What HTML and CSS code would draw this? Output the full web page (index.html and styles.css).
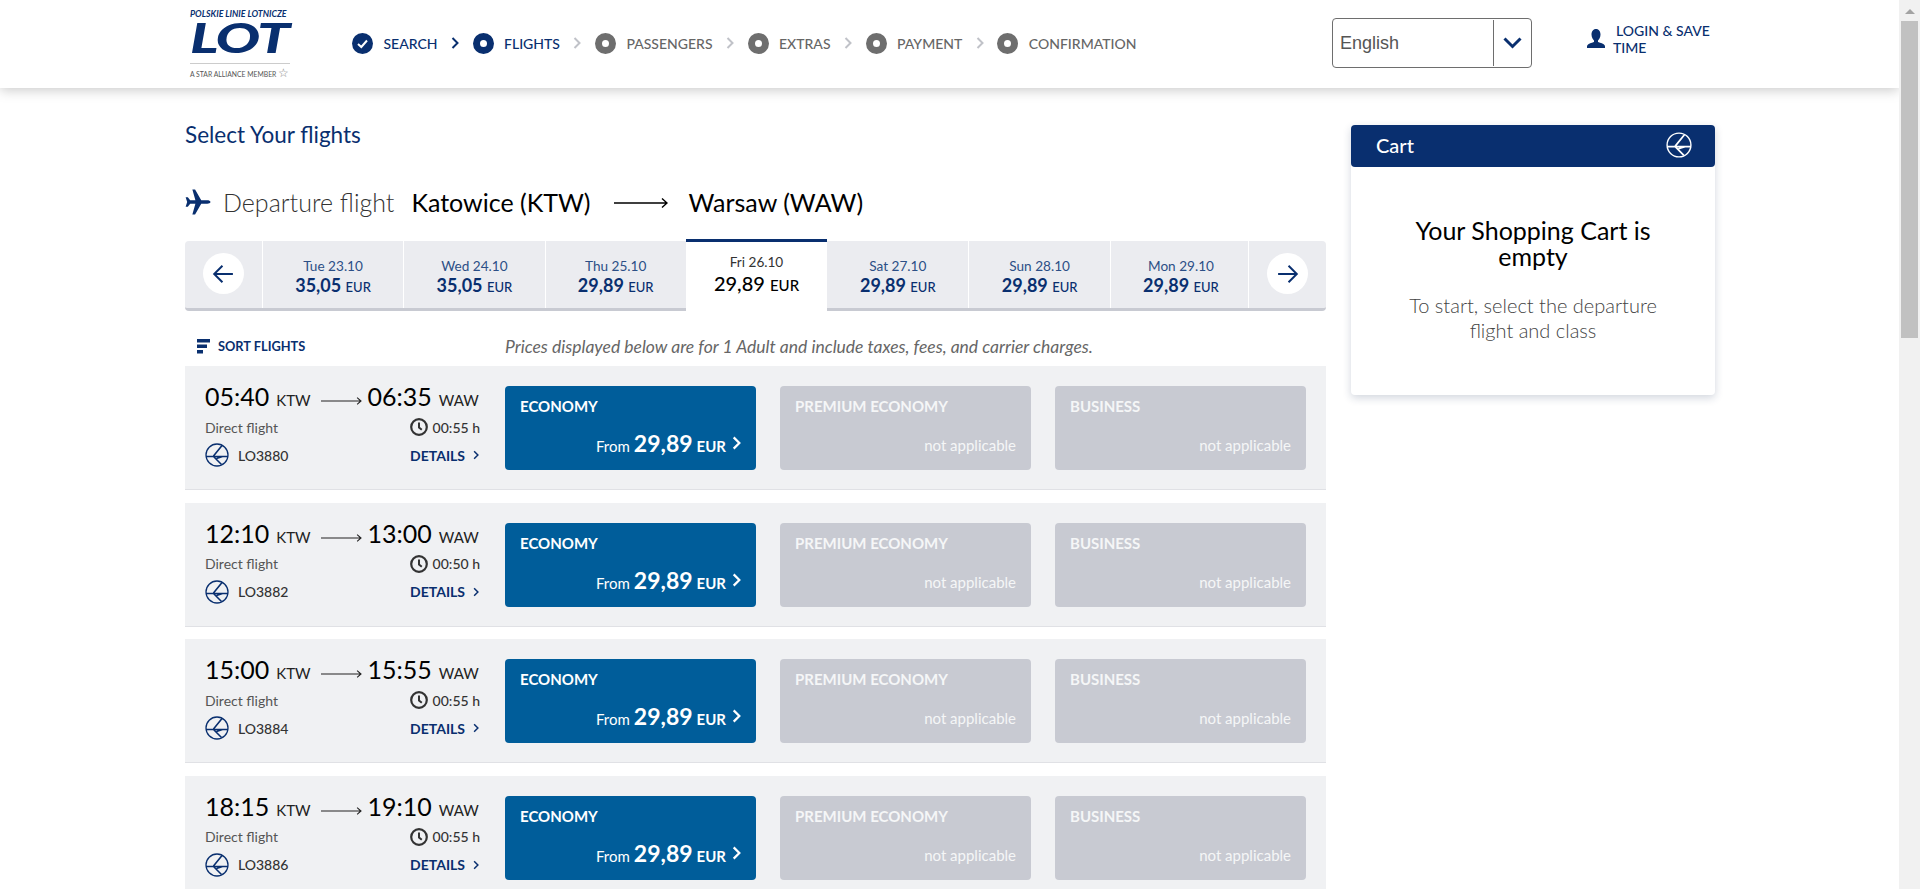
FILE: index.html
```html
<!DOCTYPE html>
<html>
<head>
    <title>LOT - Select Your flights</title>
    <link rel="stylesheet" href="styles.css">
</head>
<body>
<svg class="sprites" width="0" height="0">
    <symbol id="crane" viewBox="0 0 24 24">
        <circle cx="12" cy="12" r="11" fill="none" stroke="currentColor" stroke-width="1.3"/>
        <path d="M17 2.5 L8.5 13 M1 13.5 H23 M8.5 13.5 L16.5 21.5 M11.5 15.5 L17.5 13.5" fill="none" stroke="currentColor" stroke-width="1.6"/>
    </symbol>
    <symbol id="chev" viewBox="0 0 8 12">
        <path d="M1.5 1 L6.5 6 L1.5 11" fill="none" stroke="currentColor" stroke-width="2"/>
    </symbol>
    <symbol id="clock" viewBox="0 0 18 18">
        <circle cx="9" cy="9" r="7.8" fill="none" stroke="currentColor" stroke-width="2.2"/>
        <path d="M9 4.5 V9.5 L11.8 11.8" fill="none" stroke="currentColor" stroke-width="2"/>
    </symbol>
    <symbol id="long-arrow" viewBox="0 0 42 10">
        <path d="M0 5 H41 M37 1.5 L41 5 L37 8.5" fill="none" stroke="currentColor" stroke-width="1.1"/>
    </symbol>
</svg>
<div class="window">
    <div class="page">
        <header class="topbar">
            <div class="logo">
                <div class="logo-top">POLSKIE LINIE LOTNICZE</div>
                <div class="logo-word">LOT</div>
                <div class="logo-star">A STAR ALLIANCE MEMBER <span class="star">☆</span></div>
            </div>
            <nav class="steps">
                <span class="step done">
                    <svg class="dot" viewBox="0 0 21 21"><circle cx="10.5" cy="10.5" r="10.5" fill="#092f6f"/><path d="M6 11 L9.3 14 L15 7.5" fill="none" stroke="#fff" stroke-width="2"/></svg>
                    SEARCH
                </span>
                <svg class="step-chev on"><use href="#chev"/></svg>
                <span class="step done"><i class="ring navy"></i>FLIGHTS</span>
                <svg class="step-chev"><use href="#chev"/></svg>
                <span class="step"><i class="ring"></i>PASSENGERS</span>
                <svg class="step-chev"><use href="#chev"/></svg>
                <span class="step"><i class="ring"></i>EXTRAS</span>
                <svg class="step-chev"><use href="#chev"/></svg>
                <span class="step"><i class="ring"></i>PAYMENT</span>
                <svg class="step-chev"><use href="#chev"/></svg>
                <span class="step"><i class="ring"></i>CONFIRMATION</span>
            </nav>
            <div class="lang">
                <span class="lang-value">English</span>
                <span class="lang-btn">
                    <svg width="19" height="12" viewBox="0 0 19 12"><path d="M1.5 1.5 L9.5 9.5 L17.5 1.5" fill="none" stroke="#092f6f" stroke-width="3"/></svg>
                </span>
            </div>
            <a class="login">
                <svg width="18" height="20" viewBox="0 0 18 20"><path d="M9 0 C12 0 13.5 2.5 13.5 5.5 C13.5 8.5 12 10.5 11 11.5 V13 C13 14 18 14.5 18 17.5 V19 H0 V17.5 C0 14.5 5 14 7 13 V11.5 C6 10.5 4.5 8.5 4.5 5.5 C4.5 2.5 6 0 9 0 Z" fill="#092f6f"/></svg>
                <span class="login-text"><span class="login-first">LOGIN &amp; SAVE</span><br>TIME</span>
            </a>
        </header>

        <div class="content">
            <main class="flights">
                <h1 class="page-title">Select Your flights</h1>
                <div class="route">
                    <svg class="plane" width="26" height="26" viewBox="0 0 24 24"><path d="M23.5 12 C23.5 13 22 13.6 20.5 13.6 H15 L9.3 23.5 H6.8 L9.6 13.6 H4.8 L2.6 16.4 H0.6 L2 12 L0.6 7.6 H2.6 L4.8 10.4 H9.6 L6.8 0.5 H9.3 L15 10.4 H20.5 C22 10.4 23.5 11 23.5 12 Z" fill="#092f6f"/></svg>
                    <span class="route-label">Departure flight</span>
                    <span class="route-city">Katowice (KTW)</span>
                    <svg class="route-arrow" width="54" height="12" viewBox="0 0 54 12"><path d="M0 6 H53 M48 1.5 L53 6 L48 10.5" fill="none" stroke="#000" stroke-width="1.4"/></svg>
                    <span class="route-city">Warsaw (WAW)</span>
                </div>

                <div class="dates">
                    <div class="date-nav first">
                        <span class="round">
                            <svg width="22" height="22" viewBox="0 0 20 20"><path d="M19 10 H2 M9.5 2.5 L2 10 L9.5 17.5" fill="none" stroke="#092f6f" stroke-width="1.8"/></svg>
                        </span>
                    </div>
                    <div class="date"><span class="date-day">Tue 23.10</span><span class="date-price">35,05 <small>EUR</small></span></div>
                    <div class="date"><span class="date-day">Wed 24.10</span><span class="date-price">35,05 <small>EUR</small></span></div>
                    <div class="date"><span class="date-day">Thu 25.10</span><span class="date-price">29,89 <small>EUR</small></span></div>
                    <div class="date active"><span class="date-day">Fri 26.10</span><span class="date-price">29,89 <small>EUR</small></span></div>
                    <div class="date"><span class="date-day">Sat 27.10</span><span class="date-price">29,89 <small>EUR</small></span></div>
                    <div class="date"><span class="date-day">Sun 28.10</span><span class="date-price">29,89 <small>EUR</small></span></div>
                    <div class="date"><span class="date-day">Mon 29.10</span><span class="date-price">29,89 <small>EUR</small></span></div>
                    <div class="date-nav last">
                        <span class="round">
                            <svg width="22" height="22" viewBox="0 0 20 20"><path d="M1 10 H18 M10.5 2.5 L18 10 L10.5 17.5" fill="none" stroke="#092f6f" stroke-width="1.8"/></svg>
                        </span>
                    </div>
                </div>

                <div class="list-head">
                    <span class="sort">
                        <svg width="13" height="15" viewBox="0 0 13 15"><path d="M0 0 H13 V3.5 H0 Z M0 5.5 H10 V9 H0 Z M0 11 H6 V14.5 H0 Z" fill="#092f6f"/></svg>
                        SORT FLIGHTS
                    </span>
                    <span class="note">Prices displayed below are for 1 Adult and include taxes, fees, and carrier charges.</span>
                </div>

                <div class="flight">
                    <div class="flight-info">
                        <div class="times"><span class="time">05:40</span><span class="code">KTW</span><svg class="times-arrow"><use href="#long-arrow"/></svg><span class="time">06:35</span><span class="code">WAW</span></div>
                        <div class="info-line"><span class="direct">Direct flight</span><span class="dur"><svg class="clock"><use href="#clock"/></svg>00:55 h</span></div>
                        <div class="info-line"><span class="no"><svg class="crane"><use href="#crane"/></svg>LO3880</span><a class="details">DETAILS<svg class="det-chev"><use href="#chev"/></svg></a></div>
                    </div>
                    <div class="fare eco"><span class="fare-name">ECONOMY</span><span class="fare-price">From <b>29,89</b> <em>EUR</em><svg class="fare-chev"><use href="#chev"/></svg></span></div>
                    <div class="fare off"><span class="fare-name">PREMIUM ECONOMY</span><span class="fare-na">not applicable</span></div>
                    <div class="fare off"><span class="fare-name">BUSINESS</span><span class="fare-na">not applicable</span></div>
                </div>

                <div class="flight">
                    <div class="flight-info">
                        <div class="times"><span class="time">12:10</span><span class="code">KTW</span><svg class="times-arrow"><use href="#long-arrow"/></svg><span class="time">13:00</span><span class="code">WAW</span></div>
                        <div class="info-line"><span class="direct">Direct flight</span><span class="dur"><svg class="clock"><use href="#clock"/></svg>00:50 h</span></div>
                        <div class="info-line"><span class="no"><svg class="crane"><use href="#crane"/></svg>LO3882</span><a class="details">DETAILS<svg class="det-chev"><use href="#chev"/></svg></a></div>
                    </div>
                    <div class="fare eco"><span class="fare-name">ECONOMY</span><span class="fare-price">From <b>29,89</b> <em>EUR</em><svg class="fare-chev"><use href="#chev"/></svg></span></div>
                    <div class="fare off"><span class="fare-name">PREMIUM ECONOMY</span><span class="fare-na">not applicable</span></div>
                    <div class="fare off"><span class="fare-name">BUSINESS</span><span class="fare-na">not applicable</span></div>
                </div>

                <div class="flight">
                    <div class="flight-info">
                        <div class="times"><span class="time">15:00</span><span class="code">KTW</span><svg class="times-arrow"><use href="#long-arrow"/></svg><span class="time">15:55</span><span class="code">WAW</span></div>
                        <div class="info-line"><span class="direct">Direct flight</span><span class="dur"><svg class="clock"><use href="#clock"/></svg>00:55 h</span></div>
                        <div class="info-line"><span class="no"><svg class="crane"><use href="#crane"/></svg>LO3884</span><a class="details">DETAILS<svg class="det-chev"><use href="#chev"/></svg></a></div>
                    </div>
                    <div class="fare eco"><span class="fare-name">ECONOMY</span><span class="fare-price">From <b>29,89</b> <em>EUR</em><svg class="fare-chev"><use href="#chev"/></svg></span></div>
                    <div class="fare off"><span class="fare-name">PREMIUM ECONOMY</span><span class="fare-na">not applicable</span></div>
                    <div class="fare off"><span class="fare-name">BUSINESS</span><span class="fare-na">not applicable</span></div>
                </div>

                <div class="flight">
                    <div class="flight-info">
                        <div class="times"><span class="time">18:15</span><span class="code">KTW</span><svg class="times-arrow"><use href="#long-arrow"/></svg><span class="time">19:10</span><span class="code">WAW</span></div>
                        <div class="info-line"><span class="direct">Direct flight</span><span class="dur"><svg class="clock"><use href="#clock"/></svg>00:55 h</span></div>
                        <div class="info-line"><span class="no"><svg class="crane"><use href="#crane"/></svg>LO3886</span><a class="details">DETAILS<svg class="det-chev"><use href="#chev"/></svg></a></div>
                    </div>
                    <div class="fare eco"><span class="fare-name">ECONOMY</span><span class="fare-price">From <b>29,89</b> <em>EUR</em><svg class="fare-chev"><use href="#chev"/></svg></span></div>
                    <div class="fare off"><span class="fare-name">PREMIUM ECONOMY</span><span class="fare-na">not applicable</span></div>
                    <div class="fare off"><span class="fare-name">BUSINESS</span><span class="fare-na">not applicable</span></div>
                </div>
            </main>

            <aside class="cart">
                <div class="cart-head">
                    <span>Cart</span>
                    <svg class="cart-logo"><use href="#crane"/></svg>
                </div>
                <div class="cart-body">
                    <div class="cart-title">Your Shopping Cart is empty</div>
                    <div class="cart-sub">To start, select the departure flight and class</div>
                </div>
            </aside>
        </div>
    </div>
    <div class="scrollbar">
        <span class="scroll-up"></span>
        <span class="scroll-thumb"></span>
    </div>
</div>
</body>
</html>
```
FILE: styles.css
```css
* {
    box-sizing: border-box;
}
html, body {
    margin: 0;
    height: 100%;
    overflow: hidden;
}
body {
    font-family: Lato, "Open Sans", sans-serif;
    background-color: white;
    color: #000;
}
.sprites {
    display: block;
    height: 0;
}
.window {
    display: flex;
    height: 889px;
}
.page {
    flex: 0 0 1899px;
    height: 889px;
    overflow: hidden;
}

/* scrollbar on the right */
.scrollbar {
    flex: 0 0 21px;
    background: #f1f1f1;
    display: flex;
    flex-direction: column;
    align-items: center;
}
.scroll-up {
    margin-top: 9px;
    width: 0;
    height: 0;
    border-left: 5px solid transparent;
    border-right: 5px solid transparent;
    border-bottom: 5px solid #a3a3a3;
}
.scroll-thumb {
    margin-top: 7px;
    width: 17px;
    height: 317px;
    background: #c1c1c1;
}

/* header */
.topbar {
    height: 88px;
    display: flex;
    align-items: center;
    padding: 0 0 2px 190px;
    background: white;
    box-shadow: 0 2px 12px rgba(0,0,0,0.22);
    position: relative;
}
.logo {
    flex: 0 0 100px;
    height: 86px;
    padding-top: 9px;
    color: #092f6f;
}
.logo-top {
    font-size: 8.8px;
    font-weight: 700;
    font-style: italic;
    line-height: 9px;
    height: 9px;
    white-space: nowrap;
}
.logo-word {
    font-size: 41px;
    font-weight: 900;
    font-style: italic;
    line-height: 32px;
    height: 32px;
    letter-spacing: -1px;
    margin-top: 4px;
    transform: scaleX(1.44);
    transform-origin: left center;
}
.logo-star {
    margin-top: 9px;
    padding-top: 5px;
    border-top: 1px solid #ccc;
    font-size: 6.8px;
    line-height: 8px;
    color: #555;
    white-space: nowrap;
}
.star {
    font-size: 12px;
    line-height: 8px;
    color: #888;
}
.steps {
    flex: 0 0 980px;
    display: flex;
    align-items: center;
    margin-left: 62px;
    font-size: 14px;
    font-weight: 500;
    color: #666;
}
.step {
    display: flex;
    align-items: center;
    gap: 10.5px;
    white-space: nowrap;
}
.step.done {
    color: #092f6f;
}
.dot {
    width: 21px;
    height: 21px;
}
.ring {
    display: block;
    width: 21px;
    height: 21px;
    border-radius: 50%;
    border: 7px solid #6e6e6e;
    background: white;
}
.ring.navy {
    border-color: #092f6f;
}
.step-chev {
    width: 8px;
    height: 12px;
    margin: 0 13.5px;
    color: #c0c2c8;
}
.step-chev.on {
    color: #092f6f;
}
.lang {
    flex: 0 0 200px;
    height: 50px;
    border: 1px solid #6e6e6e;
    border-radius: 4px;
    display: flex;
    font-family: "Liberation Sans", sans-serif;
    font-size: 18px;
    color: #555;
    padding: 1px 0;
}
.lang-value {
    flex: 1;
    padding-left: 7px;
    line-height: 47px;
}
.lang-btn {
    width: 38px;
    border-left: 1px solid #6e6e6e;
    display: flex;
    align-items: center;
    justify-content: center;
}
.login {
    margin: 0 0 8px 55px;
    display: flex;
    align-items: center;
    gap: 8px;
    color: #092f6f;
    font-size: 14px;
    font-weight: 500;
    line-height: 17px;
}
.login-first {
    margin-left: 3px;
}

/* main column */
.content {
    display: flex;
    align-items: flex-start;
    padding-left: 185px;
}
.flights {
    width: 1141px;
}
.page-title {
    margin: 33px 0 0;
    font-size: 22.5px;
    font-weight: 400;
    line-height: 28px;
    color: #092f6f;
}
.route {
    display: flex;
    align-items: center;
    margin-top: 38px;
    height: 30px;
    font-size: 25px;
}
.route-label {
    margin-left: 12px;
    font-weight: 300;
    color: #333;
}
.route-city {
    margin-left: 17px;
}
.route-arrow {
    margin: 2px 4px 0 23px;
}

/* date strip */
.dates {
    display: flex;
    margin-top: 24px;
    height: 70px;
    background: #ebecf0;
    border-bottom: 3px solid #c8cad2;
    border-radius: 4px;
}
.date-nav {
    display: flex;
    align-items: center;
    justify-content: center;
    padding-bottom: 2px;
}
.date-nav.first {
    width: 77px;
}
.date-nav.last {
    width: 78px;
}
.round {
    display: flex;
    align-items: center;
    justify-content: center;
    width: 41px;
    height: 41px;
    border-radius: 50%;
    background: white;
}
.date {
    width: 141.5px;
    border-left: 1px solid white;
    display: flex;
    flex-direction: column;
    align-items: center;
    padding-top: 16px;
    color: #092f6f;
}
.date-day {
    font-size: 13.6px;
    line-height: 18px;
    color: #2c4f86;
}
.date-price {
    font-size: 18px;
    font-weight: 700;
    line-height: 20px;
}
.date-price small {
    font-size: 13px;
    font-weight: 500;
}
.date + .date-nav {
    border-left: 1px solid white;
    margin-left: -3px;
}
.date.active {
    background: white;
    border-top: 3px solid #092f6f;
    border-left: 0;
    height: 72px;
    margin-top: -2px;
    padding-top: 10px;
    color: #000;
    position: relative;
}
.date.active .date-day {
    line-height: 20px;
    color: #333;
}
.date.active .date-price {
    font-size: 20px;
    font-weight: 500;
    line-height: 22px;
}
.date.active .date-price small {
    font-size: 15px;
}
.date.active + .date {
    border-left: 0;
}

.list-head {
    display: flex;
    align-items: center;
    height: 55px;
    padding: 15px 0 0 12px;
}
.sort {
    display: flex;
    align-items: center;
    gap: 8px;
    width: 308px;
    font-size: 12.8px;
    font-weight: 700;
    color: #092f6f;
}
.note {
    font-size: 17.5px;
    font-style: italic;
    color: #666;
    white-space: nowrap;
}

/* flight rows */
.flight {
    display: flex;
    height: 124px;
    margin-bottom: 12.5px;
    padding: 20px 0 0 20px;
    background: #f0f1f3;
    border-bottom: 1px solid #e0e1e5;
}
.flight-info {
    flex: 0 0 275px;
    min-width: 0;
    margin: -3px 25px 0 0;
}
.times {
    display: flex;
    align-items: baseline;
    height: 26px;
    white-space: nowrap;
}
.time {
    font-size: 25px;
    line-height: 26px;
}
.code {
    margin-left: 7px;
    font-size: 15px;
    color: #222;
}
.times-arrow {
    flex: none;
    width: 41px;
    height: 10px;
    margin: 0 6px 0 10px;
    color: #222;
}
.info-line {
    display: flex;
    align-items: center;
    justify-content: space-between;
    font-size: 14px;
    height: 24px;
    color: #555;
    margin-top: 4px;
}
.times + .info-line {
    margin-top: 6px;
}
.dur {
    display: flex;
    align-items: center;
    gap: 5px;
    font-weight: 500;
    color: #333;
}
.clock {
    width: 18px;
    height: 18px;
}
.no {
    display: flex;
    align-items: center;
    gap: 9px;
    font-weight: 500;
    color: #333;
}
.crane {
    width: 24px;
    height: 24px;
    color: #092f6f;
}
.details {
    display: flex;
    align-items: center;
    gap: 8px;
    font-weight: 700;
    color: #092f6f;
    padding-right: 1px;
}
.det-chev {
    width: 6px;
    height: 10px;
}
.fare {
    flex: 0 0 251px;
    height: 84px;
    margin-right: 24px;
    border-radius: 4px;
    padding: 11px 15px 0;
    color: white;
    display: flex;
    flex-direction: column;
}
.fare.eco {
    background: #005d9a;
}
.fare.off {
    background: #c8cad2;
    color: #f5f6f7;
}
.fare-name {
    font-size: 15px;
    font-weight: 700;
    line-height: 18px;
}
.fare-price {
    margin-top: 13px;
    display: flex;
    align-items: baseline;
    justify-content: flex-end;
    gap: 4px;
    font-size: 15px;
    white-space: nowrap;
}
.fare-price b {
    font-size: 23px;
    font-weight: 700;
    line-height: 30px;
}
.fare-price em {
    font-style: normal;
    font-weight: 700;
}
.fare-chev {
    width: 9px;
    height: 14px;
    margin-left: 2px;
    align-self: center;
}
.fare-na {
    margin-top: 20px;
    align-self: flex-end;
    font-size: 15px;
    line-height: 20px;
}

/* cart */
.cart {
    width: 364px;
    margin: 37px 0 0 25px;
    border-radius: 4px;
    background: white;
    box-shadow: 0 3px 8px rgba(30,50,90,0.2);
}
.cart-head {
    height: 42px;
    display: flex;
    align-items: center;
    justify-content: space-between;
    padding: 0 23px 2px 25px;
    background: #092f6f;
    border-radius: 4px;
    color: white;
    font-size: 20px;
    font-weight: 500;
}
.cart-logo {
    width: 26px;
    height: 26px;
    color: white;
}
.cart-body {
    height: 228px;
    padding: 50px 40px 0;
    text-align: center;
}
.cart-title {
    font-size: 25px;
    line-height: 26px;
}
.cart-sub {
    margin-top: 24px;
    font-size: 20px;
    font-weight: 300;
    line-height: 25px;
    color: #444;
}
```
